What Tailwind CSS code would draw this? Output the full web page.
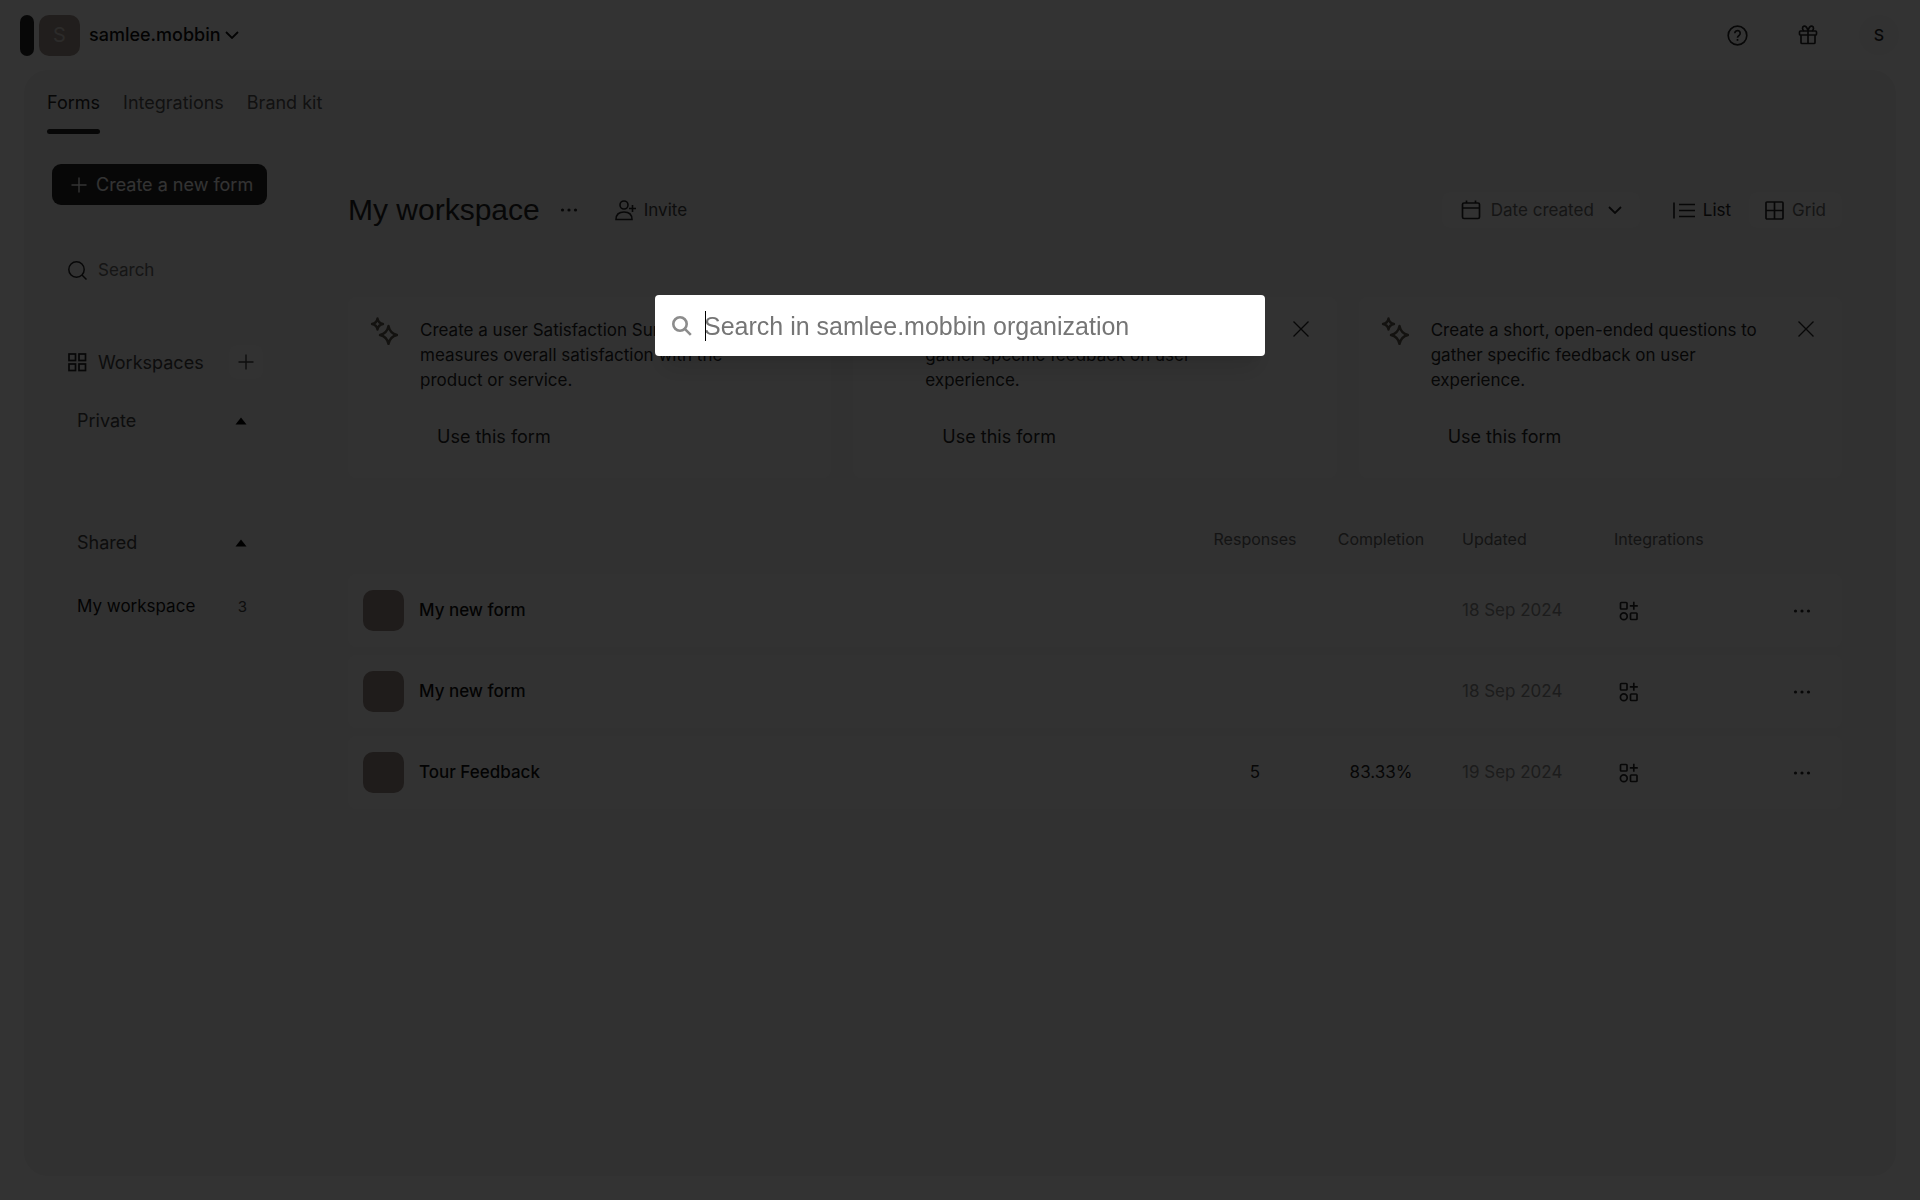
<!DOCTYPE html>
<html lang="en">
<head>
  <meta charset="UTF-8">
  <meta name="viewport" content="width=device-width, initial-scale=1.0">
  <title>My workspace</title>
  <script src="https://cdn.jsdelivr.net/npm/@tailwindcss/browser@4"></script>
</head>
<body class="bg-white font-['Inter',sans-serif] text-[17px] leading-[25px] text-[#262627]">
  <!-- Shared icons -->
  <svg class="hidden" aria-hidden="true">
    <symbol id="plus" viewBox="0 0 16 16"><path d="M8 0.5v15M0.5 8h15" fill="none" stroke="currentColor" stroke-width="1.4"/></symbol>
    <symbol id="chevron" viewBox="0 0 14 8"><path d="M1 1l6 6 6-6" fill="none" stroke="currentColor" stroke-width="1.8"/></symbol>
    <symbol id="dots" viewBox="0 0 18 4"><g fill="currentColor"><circle cx="2.5" cy="2" r="1.6"/><circle cx="9" cy="2" r="1.6"/><circle cx="15.5" cy="2" r="1.6"/></g></symbol>
    <symbol id="close" viewBox="0 0 16 16"><path d="M0.5 0.5l15 15M15.5 0.5l-15 15" fill="none" stroke="currentColor" stroke-width="1.4"/></symbol>
    <symbol id="triangle" viewBox="0 0 12 8"><path d="M6 0.5L11.5 7.5H0.5z" fill="currentColor"/></symbol>
    <symbol id="sparkles" viewBox="0 0 28 28"><g fill="none" stroke="currentColor" stroke-width="2.400" stroke-linejoin="round"><path d="M7.500 1.500Q8.300 6.200 13 7Q8.300 7.800 7.500 12.500Q6.700 7.800 2 7Q6.700 6.200 7.500 1.500z"/><path d="M18.500 9Q20 16.500 27 18Q20 19.500 18.500 27Q17 19.500 10 18Q17 16.500 18.500 9z"/></g></symbol>
    <symbol id="apps" viewBox="0 0 20 20"><g fill="none" stroke="currentColor" stroke-width="1.7"><rect x="1.500" y="1.500" width="6.500" height="6.500" rx="0.800"/><rect x="11.500" y="12" width="6.500" height="6.500" rx="0.800"/><circle cx="4.800" cy="15.300" r="3.400"/><path d="M14.800 0.800v8M10.800 4.800h8"/></g></symbol>
  </svg>

  <div class="flex min-h-screen flex-col">
    <header class="flex h-[70px] items-center justify-between pr-[21px] pl-5">
      <div class="flex items-center">
        <div class="h-[41px] w-[14px] rounded-full bg-[#262627]"></div>
        <div class="ml-[5px] flex size-[41px] items-center justify-center rounded-[10px] bg-[#a5968f] text-xl text-white/60">S</div>
        <button class="ml-[9px] flex items-center gap-1 text-lg font-medium text-[#111]">samlee.mobbin
          <svg class="h-2 w-[14px]"><use href="#chevron"/></svg>
        </button>
      </div>
      <div class="flex items-center gap-[31px]">
        <button class="flex size-10 items-center justify-center" aria-label="Help">
          <svg class="size-[21px]" viewBox="0 0 21 21" fill="none" stroke="currentColor" stroke-width="1.7"><circle cx="10.500" cy="10.500" r="9.300"/><path d="M7.800 8.300a2.700 2.700 0 1 1 4.200 2.200c-1 .7-1.500 1.100-1.500 2.200"/><path d="M10.500 14v1.800"/></svg>
        </button>
        <button class="flex size-10 items-center justify-center" aria-label="Rewards">
          <svg class="size-5" viewBox="0 0 20 20" fill="none" stroke="currentColor" stroke-width="1.700"><rect x="1.500" y="6" width="17" height="4" rx="1"/><path d="M3 10v7.500a1 1 0 0 0 1 1h12a1 1 0 0 0 1-1V10M10 6v12.500M10 6C9 2 7.500 1 6 1.200 4 1.500 4 5 6 6M10 6c1-4 2.500-5 4-4.800 2 .3 2 3.800 0 4.800"/></svg>
        </button>
        <button class="flex size-10 items-center justify-center rounded-full bg-[#f8f8f8] text-base font-medium">S</button>
      </div>
    </header>

    <div class="mx-6 mb-6 flex flex-1 flex-col rounded-3xl bg-[#f2f2f2]">
      <nav class="flex gap-[23px] pt-5 pl-[23px] text-lg leading-[25px] text-[#555]">
        <a href="#" class="flex flex-col gap-[14px] text-[#262627] after:h-[5px] after:rounded-full after:bg-[#262627]">Forms</a>
        <a href="#">Integrations</a>
        <a href="#">Brand kit</a>
      </nav>

      <div class="flex flex-1">
        <aside class="w-[324px] shrink-0 pt-[30px] pr-[81px] pl-7">
          <button class="flex h-[41px] w-full items-center gap-[9px] rounded-[9px] bg-[#262627] pl-[19px] text-lg leading-[25px] text-white">
            <svg class="size-4"><use href="#plus"/></svg>Create a new form
          </button>
          <label class="mt-[53px] flex items-center gap-[11px] pl-4">
            <svg class="size-[19px] shrink-0" viewBox="0 0 19 19" fill="none" stroke="currentColor" stroke-width="1.500"><circle cx="8.500" cy="8.500" r="7.700"/><path d="M14 14l4.500 4.500"/></svg>
            <input type="text" placeholder="Search" aria-label="Search" class="w-full outline-none placeholder:text-[#6b6b6b]">
          </label>
          <div class="mt-[62px] flex items-center pl-4 text-lg leading-[25px] text-[#444]">
            <svg class="mr-[11px] size-[19px]" viewBox="0 0 19 19" fill="none" stroke="#262627" stroke-width="1.700"><rect x="1" y="1" width="6.500" height="6.500"/><rect x="11" y="1" width="6.500" height="6.500"/><rect x="1" y="11" width="6.500" height="6.500"/><rect x="11" y="11" width="6.500" height="6.500"/></svg>
            Workspaces
            <button class="mr-1 ml-auto flex size-[34px] items-center justify-center rounded-lg bg-[#f8f8f8]" aria-label="Add workspace"><svg class="size-4"><use href="#plus"/></svg></button>
          </div>
          <button class="mt-[29px] flex w-full items-center justify-between pr-5 pl-[25px] text-lg leading-[25px] text-[#444]">Private<svg class="h-2 w-3 text-black"><use href="#triangle"/></svg></button>
          <button class="mt-[97px] flex w-full items-center justify-between pr-5 pl-[25px] text-lg leading-[25px] text-[#444]">Shared<svg class="h-2 w-3 text-black"><use href="#triangle"/></svg></button>
          <a href="#" class="mt-[39px] flex items-center justify-between pr-5 pl-[25px] text-[#111]">My workspace<span class="text-[15px] text-[#444]">3</span></a>
        </aside>

        <main class="min-w-0 flex-1 pr-[54px]">
          <div class="mt-[58px] flex h-9 items-center">
            <h1 class="font-['Liberation_Sans',sans-serif] text-[30px] leading-9">My workspace</h1>
            <button class="ml-[19px] p-[1px]" aria-label="Workspace menu"><svg class="h-1 w-[18px]"><use href="#dots"/></svg></button>
            <button class="ml-9 flex items-center gap-2 text-[#444]">
              <svg class="size-[21px]" viewBox="0 0 21 21" fill="none" stroke="#262627" stroke-width="1.600"><circle cx="9" cy="5" r="4"/><path d="M1 19.500c0-5 3-7.500 8-7.500s8 2.500 8 7.500zM17.500 5v7M14 8.500h7"/></svg>Invite
            </button>
            <button class="ml-auto flex h-9 items-center gap-[10px] rounded-lg bg-[#f8f8f8] pr-[18px] pl-[19px] text-[#6b6b6b]">
              <svg class="size-5" viewBox="0 0 20 20" fill="none" stroke="#262627" stroke-width="1.700"><rect x="1.500" y="3" width="17" height="15.500" rx="1.500"/><path d="M1.500 8h17M5.500 0.500V3M14.500 0.500V3"/></svg>
              Date created
              <svg class="ml-1 h-2 w-[14px] text-[#262627]"><use href="#chevron"/></svg>
            </button>
            <div class="ml-[15px] flex">
              <button class="flex h-9 items-center gap-2 px-[18px]">
                <svg class="h-[17px] w-[22px]" viewBox="0 0 22 17" fill="none" stroke="currentColor" stroke-width="1.700"><path d="M1 0.500v16M6 2.500h16M6 8.500h16M6 14.500h16"/></svg>List
              </button>
              <button class="flex h-9 items-center gap-2 rounded-lg bg-[#f8f8f8] px-4 text-[#6b6b6b]">
                <svg class="size-[19px]" viewBox="0 0 19 19" fill="none" stroke="#262627" stroke-width="1.700"><rect x="1" y="1" width="17" height="17" rx="1"/><path d="M9.500 1v17M1 9.500h17"/></svg>Grid
              </button>
            </div>
          </div>

          <div class="mt-[69px] grid grid-cols-3 gap-[22px]">
            <article class="flex items-start rounded-lg bg-[#fafafa] pt-5 pr-7 pb-7 pl-[22px]">
              <svg class="size-7 shrink-0 text-[#625c50]"><use href="#sparkles"/></svg>
              <div class="ml-[22px] flex-1 pt-[1px] pr-5">
                <p>Create a user Satisfaction Survey that measures overall satisfaction with the product or service.</p>
                <button class="mt-[31px] ml-[17px] text-lg leading-[25px]">Use this form</button>
              </div>
              <button class="mt-1 shrink-0" aria-label="Dismiss"><svg class="size-4"><use href="#close"/></svg></button>
            </article>
            <article class="flex items-start rounded-lg bg-[#fafafa] pt-5 pr-7 pb-7 pl-[22px]">
              <svg class="size-7 shrink-0 text-[#625c50]"><use href="#sparkles"/></svg>
              <div class="ml-[22px] flex-1 pt-[1px] pr-5">
                <p>Create a short, open-ended questions to gather specific feedback on user experience.</p>
                <button class="mt-[31px] ml-[17px] text-lg leading-[25px]">Use this form</button>
              </div>
              <button class="mt-1 shrink-0" aria-label="Dismiss"><svg class="size-4"><use href="#close"/></svg></button>
            </article>
            <article class="flex items-start rounded-lg bg-[#fafafa] pt-5 pr-7 pb-7 pl-[22px]">
              <svg class="size-7 shrink-0 text-[#625c50]"><use href="#sparkles"/></svg>
              <div class="ml-[22px] flex-1 pt-[1px] pr-5">
                <p>Create a short, open-ended questions to gather specific feedback on user experience.</p>
                <button class="mt-[31px] ml-[17px] text-lg leading-[25px]">Use this form</button>
              </div>
              <button class="mt-1 shrink-0" aria-label="Dismiss"><svg class="size-4"><use href="#close"/></svg></button>
            </article>
          </div>

          <table class="mt-[25px] w-full table-fixed border-separate border-spacing-x-0 border-spacing-y-2">
            <thead class="text-base text-[#666]">
              <tr class="h-[55px]">
                <th aria-label="Form"></th>
                <th class="w-[126px] font-normal">Responses</th>
                <th class="w-[126px] font-normal">Completion</th>
                <th class="w-[152px] pl-[18px] text-left font-normal">Updated</th>
                <th class="w-[148px] pl-[18px] text-left font-normal">Integrations</th>
                <th class="w-[98px]" aria-label="Menu"></th>
              </tr>
            </thead>
            <tbody class="text-center">
              <tr class="h-[73px] bg-[#fafafa]">
                <td class="rounded-l-lg pl-[15px]"><a href="#" class="flex items-center gap-[15px] font-medium text-[#111]"><span class="size-[41px] rounded-[10px] bg-[#9a8c86]"></span>My new form</a></td>
                <td></td>
                <td></td>
                <td class="pl-[18px] text-left text-[#8c8c8c]">18 Sep 2024</td>
                <td class="pl-[23px] text-left"><button class="block" aria-label="Add integration"><svg class="size-5"><use href="#apps"/></svg></button></td>
                <td class="rounded-r-lg pr-[31px]"><button class="ml-auto block" aria-label="Form menu"><svg class="h-1 w-[18px]"><use href="#dots"/></svg></button></td>
              </tr>
              <tr class="h-[73px] bg-[#fafafa]">
                <td class="rounded-l-lg pl-[15px]"><a href="#" class="flex items-center gap-[15px] font-medium text-[#111]"><span class="size-[41px] rounded-[10px] bg-[#9a8c86]"></span>My new form</a></td>
                <td></td>
                <td></td>
                <td class="pl-[18px] text-left text-[#8c8c8c]">18 Sep 2024</td>
                <td class="pl-[23px] text-left"><button class="block" aria-label="Add integration"><svg class="size-5"><use href="#apps"/></svg></button></td>
                <td class="rounded-r-lg pr-[31px]"><button class="ml-auto block" aria-label="Form menu"><svg class="h-1 w-[18px]"><use href="#dots"/></svg></button></td>
              </tr>
              <tr class="h-[73px] bg-[#fafafa]">
                <td class="rounded-l-lg pl-[15px]"><a href="#" class="flex items-center gap-[15px] font-medium text-[#111]"><span class="size-[41px] rounded-[10px] bg-[#9a8c86]"></span>Tour Feedback</a></td>
                <td>5</td>
                <td>83.33%</td>
                <td class="pl-[18px] text-left text-[#8c8c8c]">19 Sep 2024</td>
                <td class="pl-[23px] text-left"><button class="block" aria-label="Add integration"><svg class="size-5"><use href="#apps"/></svg></button></td>
                <td class="rounded-r-lg pr-[31px]"><button class="ml-auto block" aria-label="Form menu"><svg class="h-1 w-[18px]"><use href="#dots"/></svg></button></td>
              </tr>
            </tbody>
          </table>
        </main>
      </div>
    </div>
  </div>

  <!-- Search dialog -->
  <div class="fixed inset-0 flex items-start justify-center bg-black/80 pt-[295px]">
    <label class="relative flex h-[61px] w-[610px] items-center rounded bg-white pl-[17px] shadow-xl">
      <svg class="size-5 shrink-0" viewBox="0 0 20 20" fill="none" stroke="#8c8c8c" stroke-width="2.600"><circle cx="8" cy="8" r="6.700"/><path d="M12.800 12.800l6 6"/></svg>
      <span class="absolute top-4 left-[50px] h-[30px] w-px bg-black"></span>
      <input type="text" placeholder="Search in samlee.mobbin organization" aria-label="Search in organization" class="ml-3 h-full flex-1 pt-[2px] font-['Liberation_Sans',sans-serif] text-[25px] text-black outline-none placeholder:text-[#757575]">
    </label>
  </div>
</body>
</html>
